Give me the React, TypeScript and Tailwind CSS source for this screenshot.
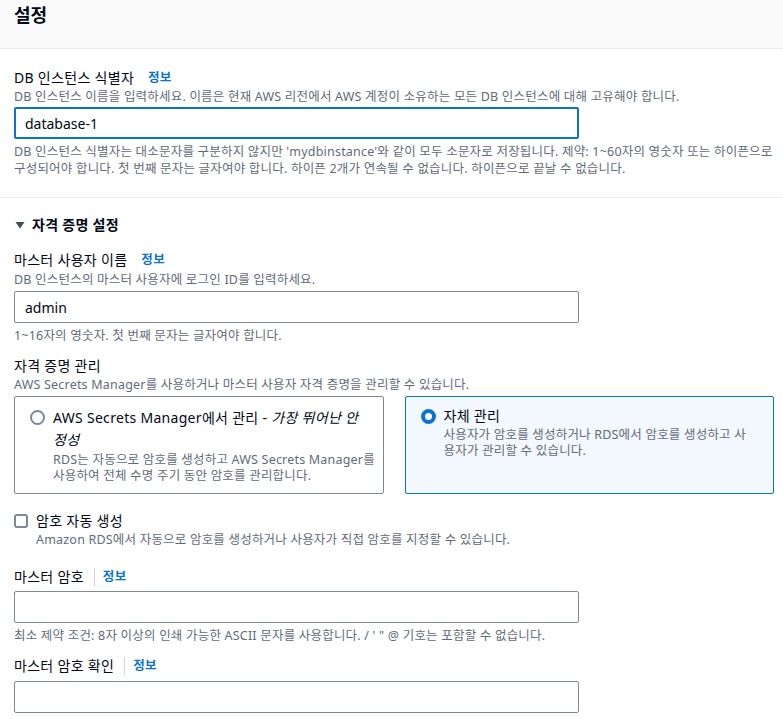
import React from "react";

const font = { fontFamily: '"Noto Sans", "Noto Sans CJK KR", sans-serif' };

function Info({ sep }: { sep?: boolean }) {
  return (
    <span className="flex items-center">
      {sep && <span className="ml-[10px] mr-[8px] h-[18px] w-px bg-[#d1d5db]" />}
      {!sep && <span className="w-[14px]" />}
      <span className="text-[12.5px] font-bold text-[#0972d3]">정보</span>
    </span>
  );
}

function Label({ text, sep }: { text: string; sep?: boolean }) {
  return (
    <div className="flex items-center text-[14px] leading-[20px] tracking-[0.3px] text-[#000716]">
      <span>{text}</span>
      <Info sep={sep} />
    </div>
  );
}

function Desc({ children, className = "" }: { children: React.ReactNode; className?: string }) {
  return (
    <p className={"whitespace-nowrap text-[12.5px] leading-[16px] tracking-[0.2px] text-[#5f6b7a] " + className}>
      {children}
    </p>
  );
}

function TextInput({ value, focused }: { value?: string; focused?: boolean }) {
  return (
    <div
      className={
        "flex h-[32px] w-[565px] items-center rounded-[2px] bg-white text-[14px] text-[#000716] " +
        (focused ? "border-2 border-[#0972d3] px-[9px]" : "border border-[#7d8998] px-[10px]")
      }
    >
      {value}
    </div>
  );
}

export default function App() {
  return (
    <div style={font} className="min-h-screen w-[783px] overflow-hidden bg-white">
      <div className="h-[49px] border-b border-[#e9ebed] bg-[#fafafa] px-[14px] pt-[2px]">
        <h1 className="text-[18px] font-bold leading-[26px] text-[#000716]">설정</h1>
      </div>

      <div className="px-[14px] pt-[19px] pb-[20px]">
        <Label text="DB 인스턴스 식별자" />
        <Desc className="mt-[1px]">
          DB 인스턴스 이름을 입력하세요. 이름은 현재 AWS 리전에서 AWS 계정이 소유하는 모든 DB 인스턴스에 대해 고유해야 합니다.
        </Desc>
        <div className="mt-[2px]">
          <TextInput value="database-1" focused />
        </div>
        <Desc className="mt-[4px] leading-[17px]">
          DB 인스턴스 식별자는 대소문자를 구분하지 않지만 'mydbinstance'와 같이 모두 소문자로 저장됩니다. 제약: 1~60자의 영숫자 또는 하이픈으로
          <br />
          구성되어야 합니다. 첫 번째 문자는 글자여야 합니다. 하이픈 2개가 연속될 수 없습니다. 하이픈으로 끝날 수 없습니다.
        </Desc>
      </div>

      <div className="border-t border-[#e9ebed] px-[14px] pt-[17px]">
        <div className="flex items-center gap-[6px] text-[14px] font-semibold leading-[20px] tracking-[0.3px] text-[#000716]">
          <svg width="12" height="12" viewBox="0 0 12 12">
            <path d="M1.5 3 L10.5 3 L6 9.5 Z" fill="#414d5c" />
          </svg>
          <span>자격 증명 설정</span>
        </div>

        <div className="mt-[15px]">
          <Label text="마스터 사용자 이름" />
          <Desc className="mt-[2px]">DB 인스턴스의 마스터 사용자에 로그인 ID를 입력하세요.</Desc>
          <div className="mt-[3px]">
            <TextInput value="admin" />
          </div>
          <Desc className="mt-[5px]">1~16자의 영숫자. 첫 번째 문자는 글자여야 합니다.</Desc>
        </div>

        <div className="mt-[12px]">
          <div className="text-[14px] leading-[20px] tracking-[0.3px] text-[#000716]">자격 증명 관리</div>
          <Desc className="mt-[1px]">AWS Secrets Manager를 사용하거나 마스터 사용자 자격 증명을 관리할 수 있습니다.</Desc>
          <div className="mt-[3px] grid w-[760px] grid-cols-2 gap-[21px]">
            <div className="flex h-[98px] gap-[8px] rounded-[2px] border border-[#7d8998] px-[15px] pt-[10px]">
              <span className="mt-[3px] h-[15px] w-[15px] shrink-0 rounded-full border-2 border-[#7d8998] bg-white" />
              <div>
                <div className="whitespace-nowrap text-[14px] leading-[22px] tracking-[0.3px] text-[#000716]">
                  AWS Secrets Manager에서 관리 - <i>가장 뛰어난 안</i>
                  <br />
                  <i>정성</i>
                </div>
                <Desc className="mt-[1px] leading-[15px]">
                  RDS는 자동으로 암호를 생성하고 AWS Secrets Manager를
                  <br />
                  사용하여 전체 수명 주기 동안 암호를 관리합니다.
                </Desc>
              </div>
            </div>
            <div className="flex h-[98px] gap-[8px] rounded-[2px] border border-[#0972d3] bg-[#f2f8fd] px-[15px] pt-[9px]">
              <span className="mt-[3px] h-[15px] w-[15px] shrink-0 rounded-full border-[4px] border-[#0972d3] bg-white" />
              <div>
                <div className="text-[14px] leading-[20px] tracking-[0.3px] text-[#000716]">자체 관리</div>
                <Desc className="mt-[1px] leading-[15px]">
                  사용자가 암호를 생성하거나 RDS에서 암호를 생성하고 사
                  <br />
                  용자가 관리할 수 있습니다.
                </Desc>
              </div>
            </div>
          </div>
        </div>

        <div className="mt-[17px] flex gap-[8px]">
          <span className="mt-[3px] h-[14px] w-[14px] shrink-0 rounded-[3px] border-2 border-[#7d8998] bg-white" />
          <div>
            <div className="text-[14px] leading-[20px] tracking-[0.3px] text-[#000716]">암호 자동 생성</div>
            <Desc className="mt-[1px]">Amazon RDS에서 자동으로 암호를 생성하거나 사용자가 직접 암호를 지정할 수 있습니다.</Desc>
          </div>
        </div>

        <div className="mt-[19px]">
          <Label text="마스터 암호" sep />
          <div className="mt-[4px]">
            <TextInput />
          </div>
          <Desc className="mt-[5px]">최소 제약 조건: 8자 이상의 인쇄 가능한 ASCII 문자를 사용합니다. / ' " @ 기호는 포함할 수 없습니다.</Desc>
        </div>

        <div className="mt-[12px]">
          <Label text="마스터 암호 확인" sep />
          <div className="mt-[5px]">
            <TextInput />
          </div>
        </div>
      </div>
    </div>
  );
}
